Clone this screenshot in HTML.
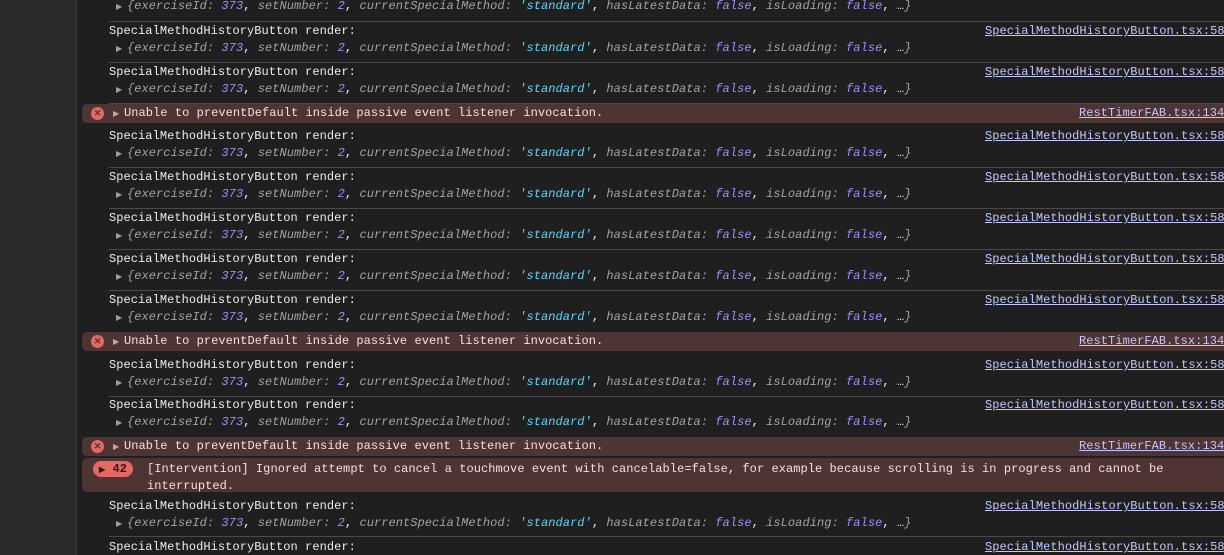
<!DOCTYPE html>
<html><head><meta charset="utf-8"><style>
*{margin:0;padding:0;box-sizing:border-box}
html,body{width:1224px;height:555px;overflow:hidden}
body{background:#1f1f1f;font-family:"Liberation Mono",monospace;font-size:12px;letter-spacing:0.06px;color:#ececec;position:relative}
.side{position:absolute;left:0;top:0;width:77px;height:555px;background:#2a2a2a;border-right:1px solid #3c3c3c}
.t{position:absolute;line-height:17px;white-space:pre}
.hr{position:absolute;left:109px;right:0;height:1px;background:#4a4a4a}
.k{color:#a0a4a8;font-style:italic}
.n{color:#a08cff;font-style:italic}
.s{color:#5cd5fb;font-style:italic}
.p{color:#a0a4a8;font-style:italic}
.tri{color:#9aa0a6;font-size:8px;display:inline-block;width:13px;font-style:normal;padding-left:2px}
.lnk{color:#c5c5ff;text-decoration:underline}
.err{position:absolute;left:82px;right:0;height:19px;background:#4e3534;border-radius:5px 0 0 5px}
.ico{position:absolute;left:91px;width:13px;height:13px;border-radius:50%;background:#e46962;color:#4e3534;font:bold 9px/13px "Liberation Sans",sans-serif;text-align:center}
.et{color:#f9dedc}
</style></head><body>
<div class="side"></div>
<div id="rows"></div>
<script>
var logs=[[31,62],[72,103],[136,167],[177,208],[218,249],[259,290],[300,0],[365,396],[405,0],[506,536],[547,0]];
var obj='<span class="tri">▶</span><span class="p">{</span><span class="k">exerciseId</span><span class="p">:</span> <span class="n">373</span>, <span class="k">setNumber</span><span class="p">:</span> <span class="n">2</span>, <span class="k">currentSpecialMethod</span><span class="p">:</span> <span class="s">\'standard\'</span>, <span class="k">hasLatestData</span><span class="p">:</span> <span class="n">false</span>, <span class="k">isLoading</span><span class="p">:</span> <span class="n">false</span>, …<span class="p">}</span>';
var h='<div class="t" style="left:114px;top:-2px">'+obj+'</div><div class="hr" style="top:21px"></div>';
logs.forEach(function(r){var y=r[0];
h+='<div class="t" style="left:109px;top:'+(y-8)+'px">SpecialMethodHistoryButton render:</div>';
h+='<div class="t lnk" style="left:985px;top:'+(y-8)+'px">SpecialMethodHistoryButton.tsx:58</div>';
h+='<div class="t" style="left:114px;top:'+(y+9)+'px">'+obj+'</div>';
if(r[1])h+='<div class="hr" style="top:'+r[1]+'px"></div>';});
[113,341,446].forEach(function(y){
h+='<div class="err" style="top:'+(y-9)+'px"></div><div class="ico" style="top:'+(y-6)+'px">✕</div>';
h+='<div class="t et" style="left:111px;top:'+(y-8)+'px"><span class="tri" style="color:#c0a8a6">▶</span>Unable to preventDefault inside passive event listener invocation.</div>';
h+='<div class="t lnk" style="left:1079px;top:'+(y-8)+'px">RestTimerFAB.tsx:134</div>';});
h+='<div class="err" style="top:458px;height:34px"></div>';
h+='<div style="position:absolute;left:93px;top:461px;width:40px;height:16px;border-radius:8px;background:#e46962;color:#2a1a1a;font-weight:bold;line-height:16px;font-size:12px;padding-left:6px"><span style="font-size:8px">▶</span> 42</div>';
h+='<div class="t et" style="left:147px;top:461px">[Intervention] Ignored attempt to cancel a touchmove event with cancelable=false, for example because scrolling is in progress and cannot be\ninterrupted.</div>';
h+='<div class="hr" style="top:536px"></div>';
document.getElementById('rows').innerHTML=h;
</script>
</body></html>
